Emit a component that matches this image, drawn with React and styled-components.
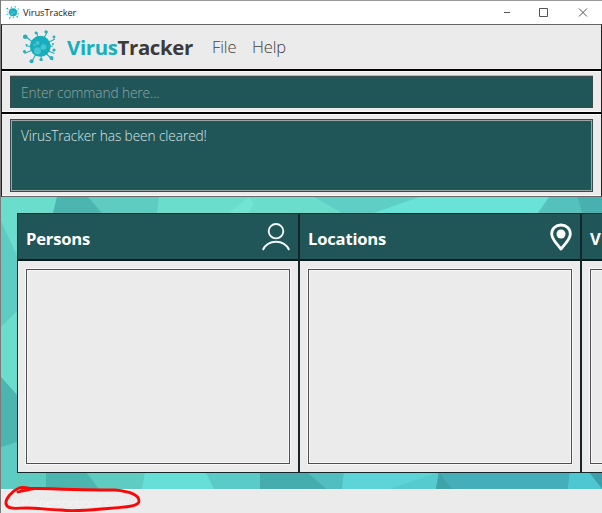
import React from "react";
import styled, { createGlobalStyle } from "styled-components";

const Global = createGlobalStyle`
  * { box-sizing: border-box; }
  body { margin: 0; overflow: hidden; }
`;

const Window = styled.div`
  width: 602px;
  height: 513px;
  display: flex;
  flex-direction: column;
  overflow: hidden;
  background: #ebebeb;
  border-left: 1px solid #7b7b7b;
  font-family: "Open Sans", "Noto Sans", sans-serif;
`;

const TitleBar = styled.header`
  height: 24px;
  flex: none;
  display: flex;
  align-items: center;
  background: #fff;
  border-top: 1px solid #9a9a9a;
  padding-left: 5px;
`;

const WindowTitle = styled.span`
  flex: 1;
  margin-left: 4px;
  color: #222;
  font: 9.3px/22px "Open Sans", sans-serif;
  letter-spacing: -0.08px;
`;

const WindowControls = styled.svg`
  width: 98px;
  height: 23px;
  flex: none;
`;

const Panel = styled.section`
  flex: none;
  height: ${(p) => p.$height}px;
  padding: ${(p) => p.$padding};
  border: 1px solid #222;
  border-top: 1px solid ${(p) => p.$top || "#000"};
  border-bottom-color: ${(p) => p.$bottom || "#000"};
  box-shadow: inset 0 1px #fafafa, inset 0 -1px #fafafa;
`;

const MenuPanel = styled(Panel)`
  display: flex;
  align-items: center;
  box-shadow: none;
`;

const Brand = styled.h1`
  margin: 0 0 0 11px;
  width: 145px;
  color: #3a3a3a;
  font-size: 20.4px;
  font-weight: 700;
  line-height: 28px;
  letter-spacing: -0.35px;
`;

const BrandAccent = styled.span`
  color: #17afbd;
`;

const MenuItem = styled.span`
  width: 40px;
  color: #3e3e3e;
  font-size: 16.5px;
  font-weight: 300;
  line-height: 24px;
  letter-spacing: -0.1px;
`;

const Field = styled.div`
  height: ${(p) => p.$height}px;
  padding: ${(p) => p.$padding};
  background: #215659;
  border: 1px solid #3b4a4b;
  box-shadow: ${(p) => (p.$framed ? "inset 0 0 0 1px #9aa5a5" : "0 -1px #b7b7b7")};
  color: ${(p) => p.$color};
  font-size: 13.7px;
  font-weight: 300;
  line-height: 20px;
  letter-spacing: ${(p) => p.$spacing};
  white-space: nowrap;
`;

const Board = styled.main`
  position: relative;
  flex: none;
  height: 292px;
  padding: 16px 0 17px 16px;
  overflow: hidden;
`;

const Backdrop = styled.svg`
  position: absolute;
  inset: 0;
  width: 601px;
  height: 292px;
`;

const Columns = styled.div`
  position: relative;
  display: flex;
  width: 846px;
  height: 260px;
`;

const Column = styled.article`
  flex: none;
  width: 282px;
  display: flex;
  flex-direction: column;
  background: #ebebeb;
  border: 1px solid #162528;
`;

const ColumnHead = styled.div`
  height: 47px;
  flex: none;
  display: flex;
  align-items: center;
  justify-content: space-between;
  padding: 0 8px 0 8px;
  background: #215659;
  border-bottom: 2px solid #06191b;
`;

const ColumnTitle = styled.h2`
  margin: 4px 0 0;
  color: #fff;
  font-size: 16.6px;
  font-weight: 700;
  line-height: 24px;
  letter-spacing: ${(p) => p.$spacing || "-0.2px"};
`;

const ListBox = styled.div`
  flex: 1;
  margin: 8px;
  border: 1px solid #505050;
  box-shadow: 0 0 0 1px #f8f8f8, inset 0 0 0 1px #f6f6f6;
`;

const StatusBar = styled.footer`
  position: relative;
  flex: 1;
  padding: 4px 0 0 11px;
  color: #f9f9f9;
  font-size: 11.6px;
  font-weight: 300;
  line-height: 18px;
  border-top: 1px solid #f6f6f6;
`;

const Highlight = styled.svg`
  position: absolute;
  left: -1px;
  top: -5px;
  width: 150px;
  height: 29px;
`;

const Virus = ({ size, x = 0 }) => (
  <svg width={size} height={size} viewBox="0 0 34 34" style={undefined}>
    <g stroke="#27aebb" strokeWidth="1.1" fill="none">
      <path d="M3.5 6.5L17 17M15 2.5L17 17M25.5 1.5L17 17M33 9L17 17M31 16L17 17M32.5 23.5L17 17M31 30L17 17M20 31L17 17M9.5 33L17 17M2.5 23.5L17 17M4 16L17 17" />
    </g>
    <g fill="#27aebb">
      <circle cx="3.2" cy="6.8" r="2.3" />
      <circle cx="14" cy="3" r="1.4" />
      <circle cx="24" cy="1.8" r="1.6" />
      <circle cx="32" cy="7" r="1.4" />
      <circle cx="31" cy="14" r="1" />
      <circle cx="32" cy="20" r="1.6" />
      <circle cx="29.5" cy="28" r="2" />
      <circle cx="19" cy="29.5" r="1.6" />
      <circle cx="9.5" cy="31.3" r="2" />
      <circle cx="2.5" cy="21.5" r="1.6" />
      <circle cx="4.5" cy="15" r="1.1" />
    </g>
    <circle cx="18.3" cy="16.3" r="10.5" fill="#17afbd" />
    <g fill="#48c5cf">
      <circle cx="15.5" cy="20.8" r="3.5" />
      <circle cx="21.5" cy="17" r="2.8" />
      <circle cx="15.5" cy="13" r="2" />
      <circle cx="12.5" cy="15" r="1.2" />
    </g>
  </svg>
);

const PersonIcon = () => (
  <svg width="28" height="28" viewBox="0 0 28 28" fill="none" stroke="#f2f5f5" strokeWidth="1.9">
    <ellipse cx="14" cy="8.2" rx="7.3" ry="7.2" />
    <path d="M.8 27C3.2 22 8 18.8 14 18.8S24.8 22 27.2 27" />
  </svg>
);

const PinIcon = () => (
  <svg width="22" height="28" viewBox="0 0 22 28">
    <path d="M11 2C5.6 2 1.7 5.9 1.7 10.9c0 5 5.2 10 9.3 15.1 4.1-5.1 9.3-10.1 9.3-15.1C20.3 5.9 16.4 2 11 2Z" fill="none" stroke="#fff" strokeWidth="2.8" strokeLinejoin="round" />
    <circle cx="11" cy="11" r="4.5" fill="#fff" />
  </svg>
);

const bright = "#6addcc";
const medium = "#5eccc0";
const dark = "#4db5b0";

const PolyBackdrop = () => (
  <Backdrop viewBox="1 197 601 292">
    <rect x="1" y="197" width="601" height="292" fill={medium} />
    <path fill={bright} d="M1 197H57L53 213V256H17L1 221ZM159 197H602V213H157ZM1 327L17 311V395L1 377Z" />
    <path fill={dark} d="M57 197H88L102 213H53ZM1 377L17 395V442L1 447Z" />
    <path fill="#71e4d3" d="M249 197L254 204L249 213H228Z" />
    <path fill="#5fcfc5" d="M314 197H420L374 213H342Z" />
    <path fill="#69e2d7" d="M420 197H549L538 213H374Z" />
    <path fill="#54c1bd" d="M549 197H577L582 213H538Z" />
    <path fill="#48b0af" d="M577 197H602V213H582Z" />
    <path fill={dark} d="M46 472H86L99 489H46Z" />
    <path fill="#66dfd7" d="M145 472H206L214 489H142Z" />
    <path fill="#5bcbc8" d="M206 472H260V489H214Z" />
    <path fill="#46acad" d="M260 472H307L327 489H260Z" />
    <path fill="#51bfc1" d="M307 472H344L342 489H327Z" />
    <path fill="#5dd5d8" d="M344 472H439L390 489H342Z" />
    <path fill="#55cbd0" d="M439 472L436 489H390Z" />
    <path fill="#45afb9" d="M439 472H570L568 489H436Z" />
    <path fill="#3fa4aa" d="M439 472L452 489H436Z" />
    <path fill="#4fc7d2" d="M570 472H589L602 489H568Z" />
    <path fill="#3d9faa" d="M589 472H602V489Z" />
  </Backdrop>
);

export default function App() {
  return (
    <>
      <Global />
      <Window>
        <TitleBar>
          <Virus size={13} />
          <WindowTitle>VirusTracker</WindowTitle>
          <WindowControls viewBox="504 1 98 23" fill="none" stroke="#555" strokeWidth="1">
            <path d="M501 12.5H510M539.5 8.5H547.5V16.5H539.5ZM579 8.5L587 16.5M587 8.5L579 16.5" />
          </WindowControls>
        </TitleBar>
        <MenuPanel $height={46} $padding="0 0 0 20px" $top="#666">
          <Virus size={34} />
          <Brand><BrandAccent>Virus</BrandAccent>Tracker</Brand>
          <MenuItem>File</MenuItem>
          <MenuItem>Help</MenuItem>
        </MenuPanel>
        <Panel $height={43} $padding="5px 8px">
          <Field $height={32} $padding="6px 10px" $color="#91a6a4" $spacing="-0.1px">Enter command here...</Field>
        </Panel>
        <Panel $height={84} $padding="5px 8px" $bottom="#666">
          <Field $framed $height={73} $padding="6px 10px" $color="#d9e3e3" $spacing="-0.1px">VirusTracker has been cleared!</Field>
        </Panel>
        <Board>
          <PolyBackdrop />
          <Columns>
            <Column>
              <ColumnHead><ColumnTitle>Persons</ColumnTitle><PersonIcon /></ColumnHead>
              <ListBox />
            </Column>
            <Column>
              <ColumnHead><ColumnTitle>Locations</ColumnTitle><PinIcon /></ColumnHead>
              <ListBox />
            </Column>
            <Column>
              <ColumnHead><ColumnTitle>V</ColumnTitle></ColumnHead>
              <ListBox />
            </Column>
          </Columns>
        </Board>
        <StatusBar>
          data\personbook.json
          <Highlight viewBox="0 485 150 29" fill="none" stroke="#fa0808" strokeWidth="2.8" strokeLinecap="round" strokeLinejoin="round">
            <path d="M18 492C24 490 28 490 33 489C27 488 23 486 19 488C12 491 5 499 6 504C8 510 16 508 27 508C39 508 48 510 61 510C78 512 98 509 113 508C123 507 139 507 139 501C139 494 126 491 115 490C86 490 57 489 21 488" />
          </Highlight>
        </StatusBar>
      </Window>
    </>
  );
}
